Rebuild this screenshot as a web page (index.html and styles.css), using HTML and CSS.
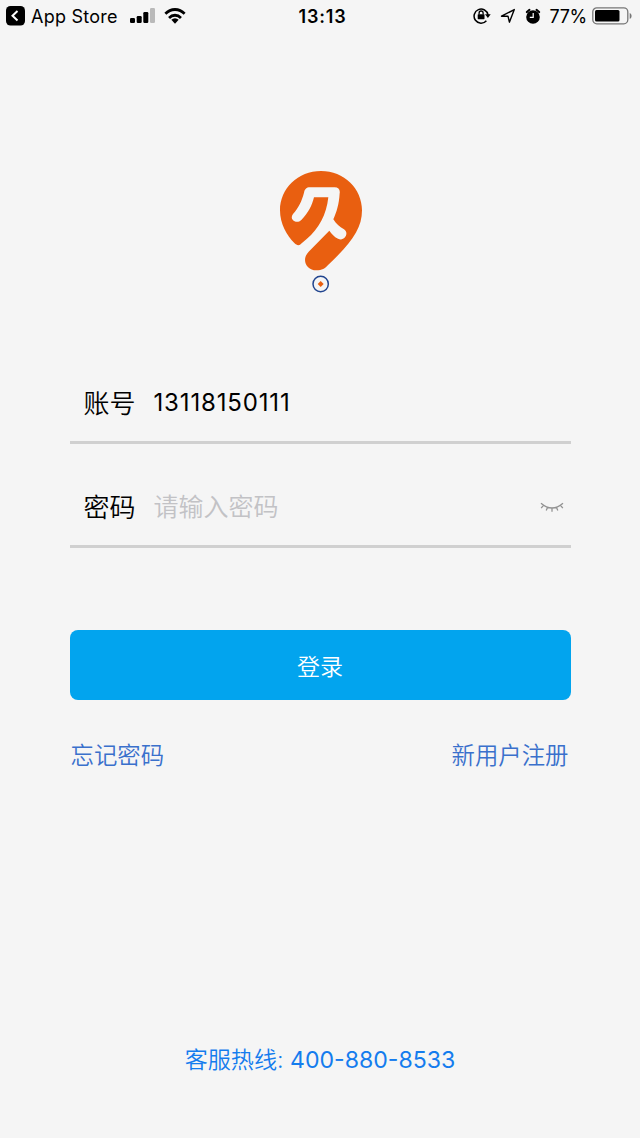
FILE: index.html
```html
<!DOCTYPE html>
<html lang="zh-CN">
<head>
<meta charset="utf-8">
<title>登录</title>
<link rel="stylesheet" href="styles.css">
</head>
<body>
<div class="screen">
  <header class="status">
    <div class="status-left">
      <svg class="back" width="19" height="20" viewBox="0 0 19 20"><rect width="19" height="19.500" rx="4.500" fill="#000"/><path d="M11.500 5 6.500 9.700l5 4.700" fill="none" stroke="#fff" stroke-width="2"/></svg>
      <span class="store">App Store</span>
      <svg class="signal" width="26" height="16" viewBox="0 0 26 16"><rect x="0" y="10" width="5" height="5" rx="1.200"/><rect x="6.700" y="8" width="5" height="7" rx="1.200"/><rect x="13.300" y="4" width="5" height="11" rx="1.200"/><rect x="20" y="0" width="5" height="15" rx="1.200" fill="#b9b9b9"/></svg>
      <svg class="wifi" width="22" height="16" viewBox="0 0 24 16" preserveAspectRatio="none"><g fill="none" stroke="#000" stroke-width="3"><path d="M1.500 5.800a15 15 0 0 1 21 0"/><path d="M5.500 10a9.300 9.300 0 0 1 13 0"/></g><path d="M8 11.800a6 6 0 0 1 8 0L12 15.800z"/></svg>
    </div>
    <span class="clock">13:13</span>
    <div class="status-right">
      <svg class="lock" width="18" height="18" viewBox="0 0 18 18"><path d="M13.400 13.700A7 7 0 1 1 15 8" fill="none" stroke="#000" stroke-width="1.500"/><path d="M12 7.300h5.700L14.900 11z"/><rect x="4.700" y="7.200" width="6.800" height="5" rx=".6"/><path d="M6.100 7.500V6a2 2 0 0 1 4 0v1.500" fill="none" stroke="#000" stroke-width="1.300"/></svg>
      <svg class="arrow" width="16" height="16" viewBox="0 0 16 16"><path d="M1.500 8.200 14.300 1.600 9.400 14.200 8 8.200z" fill="none" stroke="#000" stroke-width="1.400" stroke-linejoin="round"/></svg>
      <svg class="alarm" width="16" height="17" viewBox="0 0 16 17"><circle cx="8" cy="9" r="6.800"/><path d="m1.800 4.100 2.700-2.300M14.200 4.100l-2.700-2.300" stroke="#000" stroke-width="2" stroke-linecap="round"/><path d="M8.200 5v4.300H4.800" fill="none" stroke="#fff" stroke-width="1.200"/></svg>
      <span class="percent">77%</span>
      <svg class="battery" width="40" height="18" viewBox="0 0 40 18"><rect x=".8" y=".8" width="35" height="16" rx="4" fill="none" stroke="#777" stroke-width="1.300"/><rect x="3" y="3" width="24.500" height="11.600" rx="1.500"/><path d="M37.700 6c2.500 .8 2.500 5 0 5.800z" fill="#777"/></svg>
    </div>
  </header>

  <svg class="logo" width="110" height="140" viewBox="0 0 330 420">
    <path d="M168 33C99 33 45 86 45 151C45 191 65 227 88 249C96 257 103 258 110 250L125 237C162 206 184 165 190 112H147C141 137 130 158 109 180C95 194 71 179 84 162C101 143 110 124 117 98C119 88 124 82 135 82H209C220 82 226 89 224 100C222 134 215 155 205 178C214 192 223 200 237 208C254 219 238 246 219 236C207 230 201 222 193 212L131 275C108 299 124 331 154 331C171 331 180 325 190 314C260 248 291 206 291 151C291 86 237 33 168 33Z" fill="#e95f10"/>
    <circle cx="167" cy="372" r="23" fill="none" stroke="#21458f" stroke-width="4.500"/>
    <path d="m167 363 9 9-9 9-9-9z" fill="#e95f10"/>
  </svg>

  <main class="form">
    <label class="field"><span class="label">账号</span><span class="value">13118150111</span></label>
    <label class="field"><span class="label">密码</span><span class="placeholder">请输入密码</span>
      <svg class="eye" width="24" height="11" viewBox="0 0 24 11"><path d="M1 1.200q11 9.500 22 0M3.400 3.300 1.200 6.200M7.500 5.400l-1.300 3.200M12 6v3.700M16.500 5.400l1.300 3.200M20.600 3.300l2.200 2.900" fill="none" stroke="#929292" stroke-width="1.300"/></svg>
    </label>
    <button class="login">登录</button>
    <div class="links"><a>忘记密码</a><a>新用户注册</a></div>
  </main>

  <footer class="hotline">客服热线: <span class="phone">400-880-8533</span></footer>
</div>
</body>
</html>
```
FILE: styles.css
```css
* { box-sizing: border-box; }
body { margin: 0; background: #f5f5f5; }
.screen {
  width: 640px;
  height: 1138px;
  display: flex;
  flex-direction: column;
  background: #f5f5f5;
  color: #000;
  font-family: Inter, "Noto Sans CJK SC", sans-serif;
}
svg { display: block; flex: none; }
.status {
  height: 32px;
  display: grid;
  grid-template-columns: 1fr auto 1fr;
  align-items: center;
  padding: 0 6px;
  white-space: nowrap;
}
.status-left, .status-right { display: flex; align-items: center; }
.status-right { justify-content: flex-end; margin-right: -2px; }
.store { margin-left: 6px; font-size: 18px; letter-spacing: .25px; }
.signal { margin-left: 12px; }
.wifi { margin-left: 8px; }
.clock { font-size: 18px; font-weight: 600; letter-spacing: .8px; padding-left: 5px; }
.arrow { margin-left: 9px; }
.alarm { margin-left: 9px; }
.percent { margin-left: 9px; font-size: 18px; letter-spacing: -.3px; }
.battery { margin-left: 5px; }
.status-right { position: relative; padding-right: 4px; }
.logo { margin: 128px 0 0 265px; }
.form { display: flex; flex-direction: column; width: 501px; margin: 64px 0 0 69.500px; }
.field {
  height: 80px;
  margin-bottom: 24px;
  border-bottom: 3px solid #d0d0d0;
  display: flex;
  align-items: center;
  padding: 2px 7px 0 14px;
}
.label { width: 70px; font-size: 26px; line-height: 36px; font-weight: 350; }
.value { font-size: 24px; line-height: 36px; letter-spacing: .85px; padding-bottom: 2px; }
.placeholder { font-size: 25px; line-height: 36px; color: #c2c2c5; font-weight: 350; padding-bottom: 2px; }
.eye { margin-left: auto; }
.login {
  height: 70px;
  margin-top: 58px;
  border: 0;
  border-radius: 8px;
  background: #02a4ee;
  color: #fff;
  font: 350 23px/34px "Noto Sans CJK SC", sans-serif;
}
.links {
  display: flex;
  justify-content: space-between;
  margin-top: 38px;
  padding: 0 2px 0 1px;
  color: #3a70cc;
  font-size: 23.400px;
  font-weight: 350;
  line-height: 36px;
}
.hotline {
  margin: auto 0 60px;
  text-align: center;
  font-size: 23.100px;
  font-weight: 350;
  line-height: 36px;
  color: #147cee;
}
.phone { font-weight: 400; }
```
